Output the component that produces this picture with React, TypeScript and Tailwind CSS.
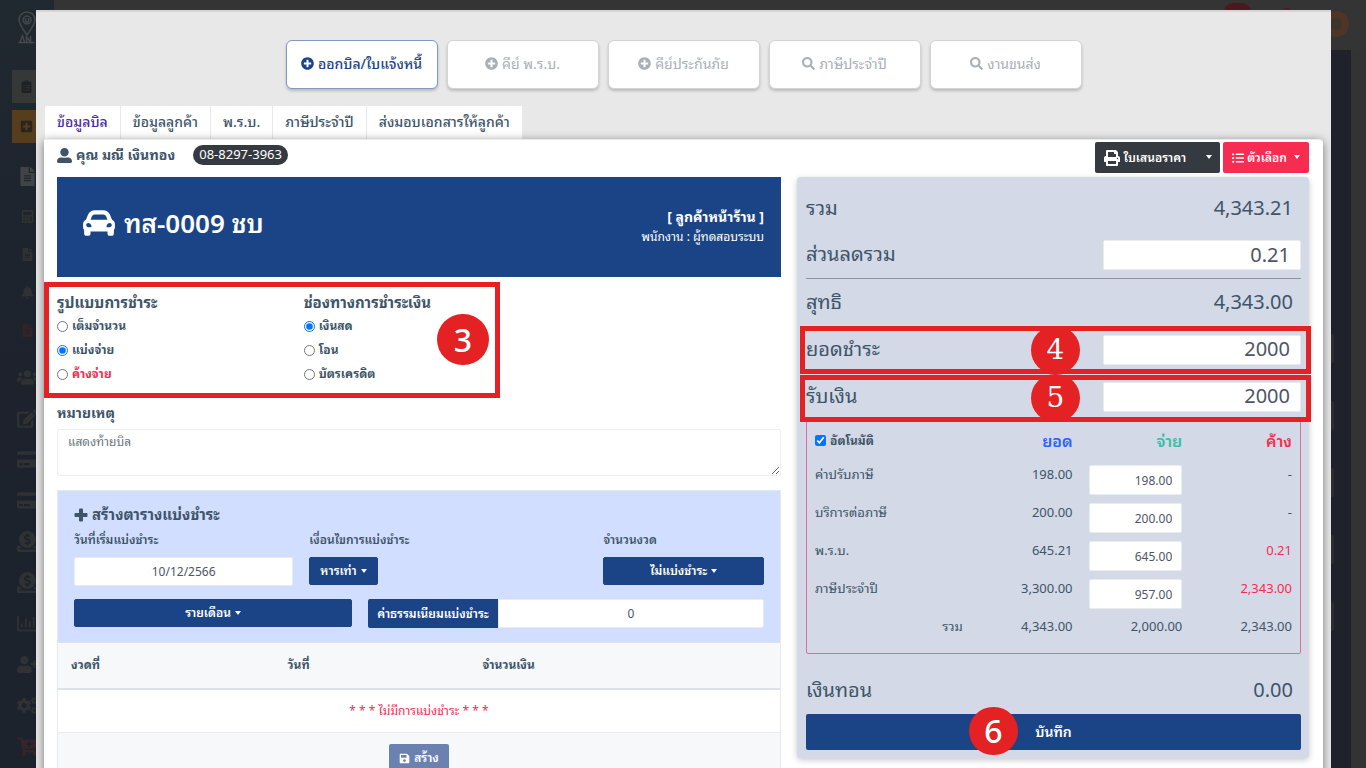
import type { ReactNode } from "react";
import {
  FaBell,
  FaCalculator,
  FaCarAlt,
  FaCartPlus,
  FaClipboardList,
  FaCogs,
  FaCreditCard,
  FaDonate,
  FaEdit,
  FaFileAlt,
  FaListUl,
  FaPlusCircle,
  FaPlusSquare,
  FaPrint,
  FaRegChartBar,
  FaSave,
  FaSearch,
  FaUserAlt,
  FaUserPlus,
  FaUsers,
} from "react-icons/fa";

const smallMenu = [
  { icon: FaCalculator, tone: "text-[#2f3133]" },
  { icon: FaFileAlt, tone: "text-[#2f3133]" },
  { icon: FaBell, tone: "text-[#2f3133]" },
  { icon: FaFileAlt, tone: "text-[#33242a]" },
];

const largeMenu = [
  { icon: FaUsers, tone: "text-[#2f3133]" },
  { icon: FaEdit, tone: "text-[#2f3133]" },
  { icon: FaCreditCard, tone: "text-[#2f3133]" },
  { icon: FaCreditCard, tone: "text-[#2f3133]" },
  { icon: FaDonate, tone: "text-[#2f3133]" },
  { icon: FaDonate, tone: "text-[#2f3133]" },
  { icon: FaRegChartBar, tone: "text-[#2f3133]" },
  { icon: FaUserPlus, tone: "text-[#2f3133]" },
  { icon: FaCogs, tone: "text-[#2f3133]" },
  { icon: FaCartPlus, tone: "text-[#35242a]" },
];

const actions = [
  { label: "ออกบิล/ใบแจ้งหนี้", icon: FaPlusCircle, active: true },
  { label: "คีย์ พ.ร.บ.", icon: FaPlusCircle, active: false },
  { label: "คีย์ประกันภัย", icon: FaPlusCircle, active: false },
  { label: "ภาษีประจำปี", icon: FaSearch, active: false },
  { label: "งานขนส่ง", icon: FaSearch, active: false },
];

const tabs = ["ข้อมูลบิล", "ข้อมูลลูกค้า", "พ.ร.บ.", "ภาษีประจำปี", "ส่งมอบเอกสารให้ลูกค้า"];

const items = [
  { name: "ค่าปรับภาษี", total: "198.00", paid: "198.00", due: "-" },
  { name: "บริการต่อภาษี", total: "200.00", paid: "200.00", due: "-" },
  { name: "พ.ร.บ.", total: "645.21", paid: "645.00", due: "0.21" },
  { name: "ภาษีประจำปี", total: "3,300.00", paid: "957.00", due: "2,343.00" },
];

function Caret() {
  return (
    <span className="mb-[2px] ml-1 inline-block border-x-[3px] border-t-[4px] border-x-transparent border-t-white align-middle" />
  );
}

function BoldPlus() {
  return (
    <svg viewBox="0 0 14 14" className="h-[14px] w-[14px]" fill="currentColor" aria-hidden="true">
      <rect x="5" y="0.5" width="4" height="13" rx="1" />
      <rect x="0.5" y="5" width="13" height="4" rx="1" />
    </svg>
  );
}

function Logo() {
  return (
    <svg viewBox="0 0 36 64" className="h-8 w-[18px] overflow-visible" fill="none" stroke="#44484b" strokeWidth="3">
      <path d="M18 46C8 32 2 24 2 16a16 16 0 0 1 32 0c0 8-6 16-16 30Z" />
      <circle cx="18" cy="16" r="8" />
      <path d="M15 12v8h6v-8M4 60l5-12 4 12M17 60V50l8 10V48M1 61h32" />
    </svg>
  );
}

function Backdrop() {
  return (
    <div className="absolute inset-0 flex bg-[#323433]" aria-hidden="true">
      <div className="flex w-[54px] shrink-0 flex-col items-center overflow-hidden bg-linear-to-b from-[#202830] via-[#1d222c] to-[#1c232c]">
        <div className="flex h-[52px] w-full items-center justify-center pt-1">
          <Logo />
        </div>
        <div className="flex w-full flex-col gap-[7px] pt-[18px] pb-3 pl-3">
          <div className="flex h-[33px] items-center bg-[#353837] pl-2 text-[#1d2124]">
            <FaClipboardList size={13} />
          </div>
          <div className="flex h-[33px] items-center bg-[#553d1e] pl-2 text-[#2c241b]">
            <FaPlusSquare size={13} />
          </div>
        </div>
        <div className="flex h-[42px] items-center text-[#414446]">
          <FaFileAlt size={19} />
        </div>
        {smallMenu.map(({ icon: Icon, tone }, i) => (
          <div key={i} className={`flex h-[38px] shrink-0 items-center ${tone}`}>
            <Icon size={13} />
          </div>
        ))}
        <div className="h-2 shrink-0" />
        {largeMenu.map(({ icon: Icon, tone }, i) => (
          <div key={i} className={`flex h-[41px] shrink-0 items-center ${tone}`}>
            <Icon size={21} />
          </div>
        ))}
      </div>
      <div className="flex grow flex-col">
        <div className="flex h-[50px] shrink-0 items-start justify-end gap-[30px] bg-[#343434] pr-[17px]">
          <span className="mt-[3px] h-[18px] w-[27px] rounded-full bg-[#4d1720]" />
          <span className="mt-2 h-3 w-3 rounded-full bg-[#521925]" />
          <span className="mt-[11px] h-[26px] w-[26px] rounded-full border-[7px] border-[#4f3526] bg-[#3d352c]" />
        </div>
        <div className="mr-[15px] flex grow flex-col gap-[38px] bg-[#1f222a] pt-[284px] pr-[17px]">
          <div className="h-[29px] rounded-xs bg-[#2c2e30]" />
          <div className="h-[29px] rounded-xs bg-[#2c2e30]" />
          <div className="h-[29px] rounded-xs bg-[#2c2e30]" />
          <div className="h-[29px] rounded-xs bg-[#2c2e30]" />
          <div className="h-[29px] rounded-xs bg-[#2c2e30]" />
        </div>
      </div>
    </div>
  );
}

function Marker({ children, className }: { children: ReactNode; className: string }) {
  return (
    <span
      className={`pointer-events-none absolute flex items-center justify-center rounded-full bg-[#e42123] font-medium text-white ${className}`}
    >
      {children}
    </span>
  );
}

function Radio({ name, label, checked, danger }: { name: string; label: string; checked?: boolean; danger?: boolean }) {
  return (
    <label
      className={`flex h-6 items-center gap-1 text-xs font-bold ${danger ? "text-[#f62d51]" : "text-[#3e5569]"}`}
    >
      <input type="radio" name={name} defaultChecked={checked} className="h-[11px] w-[11px]" />
      {label}
    </label>
  );
}

function SumRow({ label, children, className }: { label: string; children: ReactNode; className?: string }) {
  return (
    <div className={`flex h-[47px] items-center justify-between text-xl ${className ?? ""}`}>
      <span className="pb-[2px]">{label}</span>
      {children}
    </div>
  );
}

function AmountInput({ label, value }: { label: string; value: string }) {
  return (
    <input
      aria-label={label}
      defaultValue={value}
      className="h-[30px] w-2/5 rounded-xs border border-[#e9ecef] bg-white px-[10px] pb-[2px] text-right text-xl text-[#4f5467]"
    />
  );
}

const blueButton =
  "h-7 rounded-xs border border-[#1b4487] bg-[#1b4487] px-[10px] text-xs leading-4 font-semibold text-white";

function Plan() {
  return (
    <section className="mt-[14px] border border-[#e4e9f2]">
      <div className="bg-[#d2deff] px-4 pt-3 pb-[14px]">
        <h3 className="flex h-[23px] items-center gap-1 text-[15px] font-bold">
          <BoldPlus />
          สร้างตารางแบ่งชำระ
        </h3>
        <div className="grid grid-cols-12 gap-x-4 text-xs font-semibold">
          <div className="col-span-4">
            <label htmlFor="start" className="mb-[3px] flex h-7 items-center">
              วันที่เริ่มแบ่งชำระ
            </label>
            <input
              id="start"
              defaultValue="10/12/2566"
              className="h-[29px] w-full rounded-xs border border-[#e9ecef] bg-white text-center font-normal text-[#4f5467]"
            />
          </div>
          <div className="col-span-5">
            <span className="mb-[3px] flex h-7 items-center">เงื่อนไขการแบ่งชำระ</span>
            <button type="button" className={blueButton}>
              หารเท่า
              <Caret />
            </button>
          </div>
          <div className="col-span-3">
            <span className="mb-[3px] flex h-7 items-center">จำนวนงวด</span>
            <button type="button" className={`${blueButton} w-full`}>
              ไม่แบ่งชำระ
              <Caret />
            </button>
          </div>
          <div className="col-span-5 mt-[13px]">
            <button type="button" className={`${blueButton} w-full`}>
              รายเดือน
              <Caret />
            </button>
          </div>
          <div className="col-span-7 mt-[13px] flex">
            <label
              htmlFor="fee"
              className="flex h-[29px] shrink-0 items-center rounded-l-xs bg-[#1b4487] px-[9px] font-semibold text-white"
            >
              ค่าธรรมเนียมแบ่งชำระ
            </label>
            <input
              id="fee"
              defaultValue="0"
              className="h-[29px] w-full min-w-0 rounded-r-xs border border-[#e9ecef] bg-white text-center font-normal text-[#4f5467]"
            />
          </div>
        </div>
      </div>
      <table className="w-full table-fixed text-xs">
        <thead>
          <tr className="h-[46px] border-t border-b-2 border-[#dee2e6] bg-[#f6f8fa] text-left">
            <th className="w-[30%] px-[13px] font-bold">งวดที่</th>
            <th className="w-[27%] px-[13px] font-bold">วันที่</th>
            <th className="px-[13px] font-bold">จำนวนเงิน</th>
          </tr>
        </thead>
        <tbody>
          <tr className="h-[44px] border-b border-[#e9ecef]">
            <td colSpan={3} className="text-center text-[#f62d51]">
              * * * ไม่มีการแบ่งชำระ * * *
            </td>
          </tr>
          <tr className="h-[52px] bg-[#f6f8fa]">
            <td colSpan={3} className="pt-[11px] align-top">
              <button
                type="button"
                className="mx-auto flex h-7 items-center gap-1 rounded-xs bg-[#6b82b0] px-[10px] font-semibold text-white"
              >
                <FaSave size={11} />
                สร้าง
              </button>
            </td>
          </tr>
        </tbody>
      </table>
    </section>
  );
}

function Summary() {
  return (
    <aside className="relative rounded-sm bg-[#d3d9e6] py-2 pr-2 pl-[9px] shadow-[0_2px_6px_rgba(0,0,0,0.22)]">
      <SumRow label="รวม">
        <span className="pr-2 pb-[2px]">4,343.21</span>
      </SumRow>
      <SumRow label="ส่วนลดรวม" className="border-b border-[#8b94a3]">
        <AmountInput label="ส่วนลดรวม" value="0.21" />
      </SumRow>
      <SumRow label="สุทธิ">
        <span className="pr-2 pb-[2px]">4,343.00</span>
      </SumRow>
      <SumRow label="ยอดชำระ">
        <AmountInput label="ยอดชำระ" value="2000" />
      </SumRow>
      <SumRow label="รับเงิน">
        <AmountInput label="รับเงิน" value="2000" />
      </SumRow>

      <div className="h-[234px] rounded-b-xs border border-[#dd6d98] px-2">
        <table className="w-full table-fixed text-[13px] leading-5">
          <thead>
            <tr className="h-[39px] text-right text-base">
              <th className="w-[31%] text-left">
                <label className="flex items-center gap-1 text-xs font-bold">
                  <input type="checkbox" defaultChecked className="h-[11px] w-[11px]" />
                  อัตโนมัติ
                </label>
              </th>
              <th className="font-semibold text-[#2962ff]">ยอด</th>
              <th className="font-semibold text-[#36bea6]">จ่าย</th>
              <th className="font-semibold text-[#f62d51]">ค้าง</th>
            </tr>
          </thead>
          <tbody>
            {items.map((item) => (
              <tr key={item.name} className="h-[38px] text-right align-top">
                <td className="pt-1 text-left">{item.name}</td>
                <td className="pt-1">{item.total}</td>
                <td className="pt-[5px] pl-4">
                  <input
                    aria-label={item.name}
                    defaultValue={item.paid}
                    className="block h-[30px] w-full rounded-xs border border-[#e9ecef] bg-white px-[9px] text-right text-xs text-[#4f5467]"
                  />
                </td>
                <td className={item.due === "-" ? "pt-1" : "pt-1 text-[#f62d51]"}>{item.due}</td>
              </tr>
            ))}
            <tr className="h-[38px] text-right align-top">
              <td className="pt-1">รวม</td>
              <td className="pt-1">4,343.00</td>
              <td className="pt-1">2,000.00</td>
              <td className="pt-1">2,343.00</td>
            </tr>
          </tbody>
        </table>
      </div>

      <SumRow label="เงินทอน" className="mt-[13px]">
        <span className="pr-2 pb-[2px]">0.00</span>
      </SumRow>
      <button type="button" className="block h-9 w-full rounded-xs bg-[#1b4487] text-sm font-semibold text-white">
        บันทึก
      </button>

      <div className="pointer-events-none absolute top-[149px] -right-[2px] left-[3px] h-12 border-[5px] border-[#e42123]" />
      <div className="pointer-events-none absolute top-[198px] -right-[2px] left-[3px] h-[47px] border-[5px] border-[#e42123]" />
      <Marker className="top-[149px] left-[234px] h-12 w-[49px] font-['DejaVu_Serif',serif] text-[28px]">4</Marker>
      <Marker className="top-[197px] left-[234px] h-12 w-[49px] font-['DejaVu_Serif',serif] text-[28px]">5</Marker>
      <Marker className="top-[530px] left-[172px] h-12 w-[49px] text-[32px]">6</Marker>
    </aside>
  );
}

export default function App() {
  return (
    <div className="relative h-screen overflow-hidden font-['Noto_Sans','Noto_Sans_Thai_Looped','Noto_Looped_Thai',Loma,Garuda,Waree,sans-serif] text-[#3e5569]">
      <Backdrop />
      <main className="relative mt-[10px] mr-[35px] ml-9 flex min-h-screen flex-col border-t-2 border-[#d5d5d5] bg-[#e8e8e8] px-2 pt-7">
        <nav className="flex justify-center gap-[9px]">
          {actions.map(({ label, icon: Icon, active }) => (
            <button
              key={label}
              type="button"
              className={`flex h-[49px] w-[152px] items-center justify-center gap-1 rounded-md border bg-white pb-[2px] text-sm shadow-[0_2px_3px_rgba(0,0,0,0.2)] ${
                active ? "border-[#7f98c6] font-medium text-[#1b4487]" : "border-[#d4d4d4] text-[#a9b0b5]"
              }`}
            >
              <Icon size={13} />
              {label}
            </button>
          ))}
        </nav>

        <div className="mt-[17px] flex gap-px pl-px" role="tablist">
          {tabs.map((tab, i) => (
            <button
              key={tab}
              type="button"
              role="tab"
              aria-selected={i === 0}
              className={`h-[33px] bg-white px-3 pb-[2px] text-sm font-medium ${i === 0 ? "text-[#4a2fa0]" : ""}`}
            >
              {tab}
            </button>
          ))}
        </div>

        <div className="grow rounded-tr-sm border-t border-[#e9ecef] bg-white pr-[14px] pl-[13px] shadow-[0_2px_10px_rgba(0,0,0,0.5)]">
          <header className="flex h-[37px] items-start justify-between">
            <div className="flex h-[30px] items-center">
              <FaUserAlt size={15} />
              <h2 className="ml-1 text-sm font-bold">คุณ มณี เงินทอง</h2>
              <span className="ml-[18px] flex h-5 items-center rounded-full bg-[#343a40] px-[6px] text-[13px] text-white">
                08-8297-3963
              </span>
            </div>
            <div className="flex gap-[3px] pt-[2px] text-xs font-semibold text-white">
              <button type="button" className="flex h-[31px] items-center gap-1 rounded-xs bg-[#343a40] pr-2 pl-[9px]">
                <FaPrint size={16} />
                <span className="mr-3">ใบเสนอราคา</span>
                <Caret />
              </button>
              <button type="button" className="flex h-[31px] items-center gap-[3px] rounded-xs bg-[#f62d51] px-[9px]">
                <FaListUl size={12} />
                ตัวเลือก
                <Caret />
              </button>
            </div>
          </header>

          <div className="grid grid-cols-[724fr_512fr] items-start gap-4">
            <div>
              <div className="flex h-[100px] items-center justify-between bg-[#1b4487] px-[17px] pl-[25px] text-white">
                <div className="flex items-center gap-2 pb-2 text-[26px] font-semibold">
                  <FaCarAlt size={34} />
                  ทส-0009 ชบ
                </div>
                <div className="text-right">
                  <p className="text-sm leading-5 font-bold">[ ลูกค้าหน้าร้าน ]</p>
                  <p className="text-xs leading-5">พนักงาน : ผู้ทดสอบระบบ</p>
                </div>
              </div>

              <div className="relative grid grid-cols-3 gap-4 pt-[14px]">
                <fieldset>
                  <legend className="flex h-[23px] items-center text-[15px] font-bold">รูปแบบการชำระ</legend>
                  <Radio name="mode" label="เต็มจำนวน" />
                  <Radio name="mode" label="แบ่งจ่าย" checked />
                  <Radio name="mode" label="ค้างจ่าย" danger />
                </fieldset>
                <fieldset>
                  <legend className="flex h-[23px] items-center text-[15px] font-bold">ช่องทางการชำระเงิน</legend>
                  <Radio name="channel" label="เงินสด" checked />
                  <Radio name="channel" label="โอน" />
                  <Radio name="channel" label="บัตรเครดิต" />
                </fieldset>
                <div className="pointer-events-none absolute top-[5px] -left-[13px] h-[116px] w-[456px] border-[5px] border-[#e42123]" />
                <Marker className="top-[37px] left-[380px] h-[51px] w-[52px] text-[32px]">3</Marker>
              </div>

              <label htmlFor="note" className="mt-[14px] flex h-[25px] items-center text-sm font-bold">
                หมายเหตุ
              </label>
              <textarea
                id="note"
                placeholder="แสดงท้ายบิล"
                className="mt-1 block h-[47px] w-full rounded-xs border border-[#eceff2] px-[10px] py-1 text-xs placeholder:text-[#6c757d]"
              />
              <Plan />
            </div>
            <Summary />
          </div>
        </div>
      </main>
    </div>
  );
}
